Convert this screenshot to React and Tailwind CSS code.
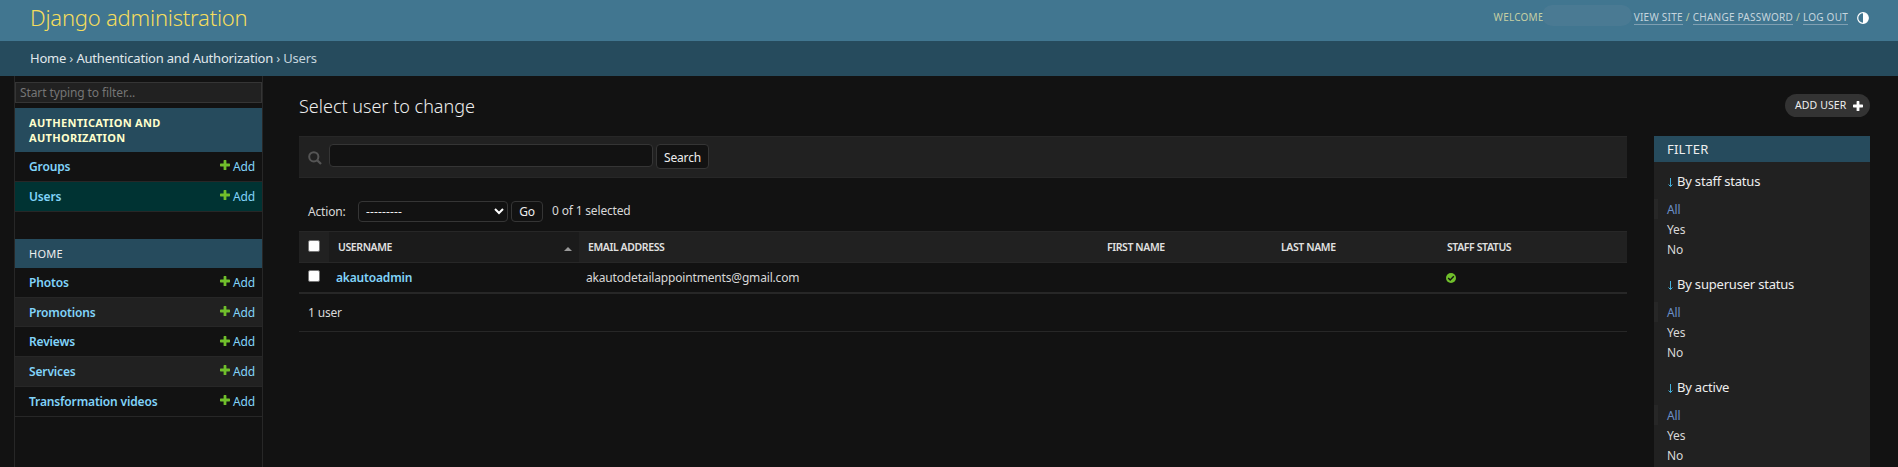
import React from "react";

function Plus({ className }) {
  return (
    <svg viewBox="0 0 10 10" className={className} fill="currentColor">
      <path d="M3.6 0.6q0-.6.6-.6h1.6q.6 0 .6.6V3.6H9.4q.6 0 .6.6v1.6q0 .6-.6.6H6.4v3q0 .6-.6.6H4.2q-.6 0-.6-.6v-3H.6q-.6 0-.6-.6V4.2q0-.6.6-.6h3z" />
    </svg>
  );
}

function ModelRow({ name, className }) {
  return (
    <div className={`flex items-center justify-between border-b border-[#272727] pl-[14px] pr-[7px] text-[12px] tracking-[-0.15px] text-[#81d4fa] ${className}`}>
      <a className="font-semibold">{name}</a>
      <a className="flex items-center">
        <Plus className="mr-[3px] mb-[3px] size-[10px] text-[#70bf2b]" />
        Add
      </a>
    </div>
  );
}

function FilterGroup({ title }) {
  return (
    <section className="h-[103px]">
      <h3 className="flex h-[19px] items-center gap-[4px] pl-[14px] text-[13px] tracking-[-0.2px] text-[#eeeeee]">
        <svg viewBox="0 0 5 9" className="mt-[2px] h-[9px] w-[5px]" fill="none" stroke="#43b0dc">
          <path d="M2.5 0v8.5M0.5 6.5l2 2 2-2" />
        </svg>
        {title}
      </h3>
      <ul className="pt-[8px] text-[12px] leading-[22px] tracking-[-0.15px] text-[#d8d8d8]">
        <li className="h-5 border-l-4 border-[#272727] pl-[9px] text-[#6b8fc7]">All</li>
        <li className="h-5 pl-[13px]">Yes</li>
        <li className="h-5 pl-[13px]">No</li>
      </ul>
    </section>
  );
}

function Checkbox({ className }) {
  return <span className={`block size-[12px] rounded-[2px] border border-[#767676] bg-white ${className ?? ""}`} />;
}

function Header() {
  return (
    <header className="flex h-[41px] justify-between bg-[#417690] pl-[30px] pr-[28px]">
      <h1 className="pt-[2px] text-[22px] font-light leading-[30px] tracking-[-0.22px] text-[#f5dd5d]">Django administration</h1>
      <div className="flex h-[35px] items-center text-[10px] tracking-[0.24px] text-[#c5cfa4]">
        <span>WELCOME</span>
        <span className="-ml-[2px] mr-[2px] mb-[5px] h-[21px] w-[90px] rounded-full bg-[#4a7a93]" />
        <a className="border-b border-[#7f9fb2] leading-[14px] text-[#c5d5de]">VIEW SITE</a>
        <span className="mx-[3px]">/</span>
        <a className="border-b border-[#7f9fb2] leading-[14px] text-[#c5d5de]">CHANGE PASSWORD</a>
        <span className="mx-[3px]">/</span>
        <a className="border-b border-[#7f9fb2] leading-[14px] text-[#c5d5de]">LOG OUT</a>
        <svg viewBox="0 0 12 12" className="ml-[9px] mr-[1px] mt-[1px] size-[12px]">
          <circle cx="6" cy="6" r="5.3" fill="none" stroke="#ffffff" strokeWidth="1.2" />
          <path d="M6 0.7a5.3 5.3 0 0 1 0 10.6z" fill="#ffffff" />
        </svg>
      </div>
    </header>
  );
}

function Sidebar() {
  return (
    <nav className="ml-[14px] w-[249px] shrink-0 border-x border-[#272727] pt-[6px]">
      <div className="mb-[5px] h-[21px] border border-[#353535] bg-[#212121] pl-[4px] text-[12px] leading-[19px] tracking-[-0.1px] text-[#757575]">
        Start typing to filter...
      </div>
      <h2 className="h-[44px] bg-[#264b5d] pl-[14px] pt-[7px] text-[11px] font-bold leading-[15px] tracking-[0.31px] text-[#ffffcc]">
        AUTHENTICATION AND
        <br />
        AUTHORIZATION
      </h2>
      <ModelRow name="Groups" className="h-[30px]" />
      <ModelRow name="Users" className="h-[30px] bg-[#003333]" />
      <h2 className="mt-[27px] h-[29px] bg-[#264b5d] pl-[14px] text-[11px] leading-[30px] tracking-[0.3px] text-[#eeeeee]">
        HOME
      </h2>
      <ModelRow name="Photos" className="h-[30px]" />
      <ModelRow name="Promotions" className="h-[29px] bg-[#212121] pt-px" />
      <ModelRow name="Reviews" className="h-[30px] pt-px" />
      <ModelRow name="Services" className="h-[30px] bg-[#212121]" />
      <ModelRow name="Transformation videos" className="h-[30px]" />
    </nav>
  );
}

function Changelist() {
  return (
    <div className="w-[1328px] text-[12px] tracking-[-0.17px] text-[#d8d8d8]">
      <div className="flex h-[42px] border-y border-[#272727] bg-[#212121] pl-[9px] pt-[7px]">
        <svg viewBox="0 0 14 14" className="mt-[7px] size-[14px]" fill="none" stroke="#555555" strokeWidth="2">
          <circle cx="5.8" cy="5.8" r="4.6" />
          <path d="M9.2 9.2l3.8 3.8" strokeWidth="2.3" />
        </svg>
        <div className="ml-[7px] h-[23px] w-[324px] rounded-[4px] border border-[#353535] bg-[#121212]" />
        <button className="ml-[3px] h-[25px] w-[53px] rounded-[4px] border border-[#353535] bg-[#121212] leading-[25px] tracking-[-0.15px] text-[#eeeeee]">
          Search
        </button>
      </div>
      <div className="flex h-[53px] pl-[9px] pt-[23px]">
        <span className="w-[50px] leading-[21px]">Action:</span>
        <div className="flex h-[21px] w-[150px] items-center justify-between rounded-[4px] border border-[#353535] bg-[#121212] pl-[7px] pr-[3px] text-[#eeeeee]">
          <span className="tracking-[0.15px]">---------</span>
          <svg viewBox="0 0 10 7" className="h-[7px] w-[10px]" fill="none" stroke="#ffffff" strokeWidth="2">
            <path d="M1 1l4 4 4-4" />
          </svg>
        </div>
        <button className="ml-[3px] h-[21px] w-[32px] rounded-[4px] border border-[#353535] bg-[#121212] leading-[20px] tracking-[-0.15px] text-[#eeeeee]">
          Go
        </button>
        <span className="ml-[9px] leading-[19px]">0 of 1 selected</span>
      </div>
      <div className="grid h-[32px] grid-cols-[30px_250px_520px_173px_166px_1fr] border-y border-[#272727] bg-[#212121] text-[10.5px] font-semibold leading-[30px] tracking-[-0.4px] text-[#e0e0e0]">
        <div className="pl-[9px] pt-[8px]">
          <Checkbox />
        </div>
        <div className="flex items-center justify-between bg-[#1b1b1b] pl-[9px] pr-[7px]">
          USERNAME
          <svg viewBox="0 0 8 4" className="mt-[3px] h-[4px] w-[8px]" fill="#999999">
            <path d="M4 0l4 4H0z" />
          </svg>
        </div>
        <div className="pl-[9px]">EMAIL ADDRESS</div>
        <div className="pl-[8px]">FIRST NAME</div>
        <div className="pl-[9px]">LAST NAME</div>
        <div className="pl-[9px]">STAFF STATUS</div>
      </div>
      <div className="grid h-[31px] grid-cols-[30px_250px_520px_173px_166px_1fr] border-b-2 border-[#272727] leading-[29px]">
        <div className="pl-[9px] pt-[7px]">
          <Checkbox />
        </div>
        <div className="pl-[7px] font-semibold text-[#81d4fa]">akautoadmin</div>
        <div className="pl-[7px]">akautodetailappointments@gmail.com</div>
        <div />
        <div />
        <div className="pl-[8px] pt-[10px]">
          <svg viewBox="0 0 10 10" className="size-[10px]">
            <circle cx="5" cy="5" r="5" fill="#70bf2b" />
            <path d="M2.2 4.9l2 2 3.6-3.6" fill="none" stroke="#121212" strokeWidth="1.4" />
          </svg>
        </div>
      </div>
      <div className="h-[38px] border-b border-[#272727] pl-[9px] leading-[37px]">1 user</div>
    </div>
  );
}

export default function App() {
  return (
    <div className="flex h-[467px] flex-col overflow-hidden bg-[#121212] font-['Noto_Sans',sans-serif]">
      <Header />
      <div className="h-[35px] shrink-0 bg-[#264b5d] pl-[30px] text-[13px] leading-[35px] tracking-[-0.2px] text-[#c5d5de]">
        <span className="text-[#e0e8ec]">Home</span> › <span className="text-[#e0e8ec]">Authentication and Authorization</span> › Users
      </div>
      <div className="flex min-h-0 flex-1">
        <Sidebar />
        <main className="flex-1 pl-[36px] pr-[28px] pt-[18px]">
          <div className="flex h-[42px] items-start justify-between">
            <h2 className="text-[18px] font-light leading-[25px] text-[#eeeeee]">Select user to change</h2>
            <a className="flex h-[23px] w-[85px] items-center justify-between rounded-full bg-[#333333] pl-[10px] pr-[7px] text-[10.5px] tracking-[0.1px] text-[#eeeeee]">
              ADD USER
              <Plus className="size-[10px] text-white" />
            </a>
          </div>
          <div className="flex justify-between">
            <Changelist />
            <aside className="h-[400px] w-[216px] bg-[#212121]">
              <h2 className="mb-[10px] h-[26px] bg-[#264b5d] pl-[13px] text-[13px] leading-[27px] tracking-[0.2px] text-[#eeeeee]">FILTER</h2>
              <FilterGroup title="By staff status" />
              <FilterGroup title="By superuser status" />
              <FilterGroup title="By active" />
            </aside>
          </div>
        </main>
      </div>
    </div>
  );
}
